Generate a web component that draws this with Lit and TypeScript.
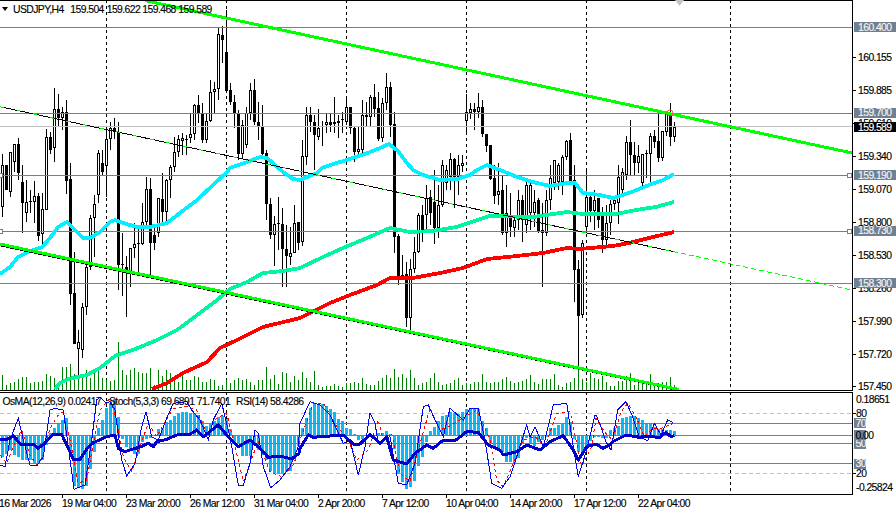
import { LitElement, html, svg, css } from "lit";
import { customElement } from "lit/decorators.js";

// [high, bodyTop, bodyBottom, low, black?] in chart pixels, one per bar (4px apart)
const C: number[][] = [
[154,165,207,217,0],[165,165,190,190,1],[152,152,192,197,0],[144,144,162,172,0],[138,144,173,180,1],[165,182,203,233,1],[180,202,213,222,0],[190,201,202,213,0],[181,196,202,223,0],[193,196,236,241,1],
[193,209,234,244,0],[129,137,210,210,0],[132,137,150,154,1],[88,109,148,162,0],[94,109,118,127,1],[107,112,118,130,0],[100,112,181,194,1],[163,179,294,305,1],[252,293,344,344,1],[330,342,349,378,0],
[303,307,350,358,0],[263,267,307,315,0],[215,218,267,270,0],[195,204,218,257,0],[150,153,195,203,0],[150,163,172,175,1],[130,139,166,197,0],[122,128,139,150,0],[118,128,132,139,1],[122,132,265,290,1],
[233,264,265,296,1],[256,267,273,317,1],[248,248,273,287,0],[223,244,248,258,0],[225,243,244,272,0],[203,222,244,245,0],[177,189,222,227,0],[178,189,243,275,1],[228,235,243,250,1],[198,198,233,237,0],
[173,199,212,225,1],[179,180,212,222,0],[165,167,180,198,0],[137,152,167,172,0],[135,139,152,157,0],[133,138,141,155,0],[135,139,140,155,0],[113,134,138,143,0],[104,105,134,140,0],[95,105,113,123,1],
[103,114,140,143,1],[113,121,140,143,0],[80,92,121,122,0],[82,89,92,113,0],[27,34,89,100,0],[26,35,40,63,1],[10,52,91,92,1],[83,90,102,105,1],[95,102,114,128,1],[110,114,154,160,1],
[120,125,154,158,0],[107,113,145,148,0],[83,90,113,120,0],[79,90,122,125,1],[102,122,127,140,1],[105,127,154,157,1],[150,153,204,220,1],[198,204,235,239,1],[216,224,235,266,0],[197,223,224,250,0],
[208,224,249,287,1],[225,249,256,287,1],[227,253,257,265,0],[205,223,253,253,0],[222,222,243,250,1],
[140,156,242,246,0],[107,115,157,165,0],[107,115,122,132,1],[115,122,135,170,1],[109,128,137,140,0],[121,126,127,146,0],[113,122,125,133,0],[114,122,125,132,1],[97,122,124,133,0],[115,121,123,138,0],
[112,119,120,133,0],[97,107,122,125,0],[107,107,128,134,1],[126,128,152,162,1],[126,149,152,155,0],[100,115,150,153,0],[102,115,117,126,1],[95,97,117,127,0],[84,97,109,117,1],[92,108,139,141,1],
[98,103,138,142,0],[73,87,103,110,0],[82,87,125,137,1],[112,124,237,253,1],[234,236,277,285,1],[255,275,277,280,0],[262,274,318,327,1],[259,269,318,332,0],[237,252,269,273,0],[213,215,252,253,0],
[205,215,232,242,1],[185,198,215,232,0],[190,197,213,225,1],[170,202,228,244,1],[185,205,228,238,0],[160,165,205,207,0],[165,170,183,190,0],[153,159,177,190,0],[158,159,177,208,1],[155,165,177,195,0],
[155,163,166,172,0],[94,112,121,135,0],[103,109,113,119,0],[103,109,112,130,1],[93,107,112,118,0],[100,107,134,137,1],[134,134,146,152,1],[145,145,179,180,1],[165,178,196,204,1],[163,191,195,205,0],
[175,190,233,235,1],[185,213,233,247,0],[193,218,227,237,1],[215,220,228,237,0],[190,200,220,230,0],[195,200,220,242,1],[182,185,225,233,0],[180,185,213,230,0],[190,202,213,227,0],[198,200,232,233,1],
[203,230,233,287,1],[190,200,233,236,0],[165,178,200,210,0],[160,160,183,190,0],[163,165,182,190,0],[155,157,182,195,0],[140,141,157,160,0],[133,140,182,182,1],[165,180,270,302,1],[260,269,316,370,1],
[240,243,315,318,0],[170,197,227,232,0],[192,197,211,222,1],[190,200,211,230,0],[198,198,220,228,1],[207,215,240,253,1],[205,223,240,245,0],[200,204,223,235,0],[197,200,204,210,0],[165,177,203,224,0],
[168,172,190,195,0],[136,142,175,180,0],[120,142,155,175,1],[142,155,163,175,1],[145,156,163,173,0],[154,154,183,186,0],[150,153,154,178,0],[133,136,154,183,0],[130,136,142,148,1],[113,141,158,162,1],
[131,131,158,161,0],[112,113,132,136,0],[103,115,137,146,1],[122,127,137,142,0],
];

const V = [15,5,7,8,11,13,13,7,8,8,9,16,14,12,3,23,23,26,16,12,14,20,12,18,20,12,10,9,10,48,20,15,20,22,18,17,17,22,5,20,14,20,17,13,8,14,10,10,14,13,8,8,11,10,4,5,10,7,10,12,10,11,8,5,10,10,23,11,15,6,18,17,8,14,10,18,12,8,19,5,3,4,4,6,4,3,7,7,8,7,12,6,5,5,9,12,15,12,21,13,16,12,20,12,5,7,8,12,17,8,5,6,7,10,12,5,7,6,8,8,16,8,7,8,8,11,13,9,7,8,9,11,15,8,6,11,11,11,16,5,3,7,8,12,28,11,8,17,12,11,14,8,4,4,9,9,14,17,5,8,8,9,16,5,7,8,8,13,5];

const H = [-21,-18,-14,-19,-21,-24,-24,-24,-27,-27,-24,-9,3,8,12,16,18,-18,-50,-52,-53,-50,-33,-16,8,16,28,32,37,19,-3,-11,-14,-18,-18,-6,-3,-2,0,7,8,14,16,20,23,24,24,23,23,21,15,10,12,15,19,20,17,7,-8,-8,-20,-20,-20,-9,-14,-19,-24,-35,-37,-38,-38,-36,-35,-20,-10,8,18,28,32,32,32,30,27,24,17,15,8,7,2,-4,-3,1,1,1,3,3,5,2,-13,-38,-46,-53,-51,-45,-30,-21,-6,5,9,15,20,21,24,23,22,24,27,28,27,27,15,8,-7,-10,-13,-16,-26,-26,-27,-22,-8,-2,-7,-10,-6,-4,-1,8,8,11,13,19,14,-3,-16,-16,-10,-5,-1,-1,-2,-2,6,8,10,18,19,20,20,18,16,13,12,9,7,7,6,6,5];

const CYAN = "0,274 10,267 18,257 28,252 42,247 50,238 58,227 67,222 75,230 83,238 90,238 100,232 110,222 115,220 123,223 137,227 150,227 167,223 180,213 197,200 213,185 227,172 230,168 247,162 260,157 267,158 283,172 293,179 300,180 317,173 322,168 340,162 353,158 370,152 380,148 389,144 397,150 407,163 413,170 423,175 440,180 457,179 470,175 477,170 487,165 500,170 517,177 533,182 550,186 567,183 575,183 583,193 600,195 613,198 629,193 649,185 663,180 674,174";
const SPRING = "55,389 60,383 68,379 87,375 100,368 115,356 133,350 157,340 177,330 200,313 217,300 230,289 247,282 263,273 283,271 300,268 323,257 343,248 367,238 390,228 410,232 433,231 457,227 477,220 490,216 533,217 553,214 567,212 583,214 616,214 636,210 656,207 674,202";
const RED = "152,389 167,383 183,373 207,362 220,348 237,340 263,327 300,318 310,313 330,303 350,295 377,285 390,278 413,278 440,273 463,268 487,259 517,256 543,253 567,248 580,249 613,246 629,243 649,238 674,232";

// Sub-window curves, read in 3x zoom coordinates per crop
const z = (off: number, s: string) =>
  s.trim().split(/\s+/).map((p) => {
    const [x, y] = p.split(",").map(Number);
    return `${(off + x / 3).toFixed(1)},${(340 + y / 3).toFixed(1)}`;
  }).join(" ");

const RSI = z(0, "0,300 20,298 40,288 62,313 100,313 115,325 135,308 160,283 185,283 205,325 220,358 240,358 262,325 280,308 320,290 345,285 355,325 375,335 430,317 445,310 460,320 470,305 500,298 530,285 570,283 590,270 610,290 655,255 680,285 715,320 750,300 775,320 805,352 840,348 875,357 897,340")
 + " " + z(300, "0,325 25,285 40,292 90,288 130,285 160,312 180,312 210,283 240,310 260,290 280,360 320,372 345,340 380,315 400,325 430,300 465,302 500,275 535,277 565,315 600,330 610,345 650,335 680,315 720,330 750,305 790,287 820,330 835,360 860,320 890,312")
 + " " + z(596, "0,312 20,325 40,315 50,305 90,285 130,292 160,288 190,293 210,277 225,290 235,287");
const STO = z(0, "0,375 15,380 30,300 55,235 70,300 90,375 110,378 130,350 150,210 165,205 190,210 205,320 222,448 255,435 275,300 290,180 300,172 320,190 330,185 345,210 365,360 380,408 405,370 425,260 438,215 455,290 475,300 500,235 520,190 560,185 575,210 600,240 625,300 640,240 665,190 690,290 715,435 730,435 750,370 765,270 775,280 790,380 812,443 840,420 870,380 895,320")
 + " " + z(300, "0,250 30,185 60,195 90,225 130,310 150,300 175,405 195,320 210,218 225,250 235,310 250,300 270,290 295,430 320,435 345,370 370,200 385,195 405,240 430,290 450,205 490,240 510,205 535,205 555,300 575,430 605,445 630,410 650,350 680,255 690,290 705,260 730,320 760,195 800,190 820,320 835,410 860,330 885,225")
 + " " + z(596, "0,225 15,260 30,305 45,330 65,210 90,185 110,230 130,290 155,303 175,250 195,285 215,240 232,248");
const SIG = z(0, "0,345 20,370 40,320 65,270 90,345 110,375 130,345 150,265 175,225 190,215 210,300 235,430 260,420 280,310 300,210 330,175 350,240 370,350 395,395 420,320 445,250 470,290 495,245 520,205 560,200 590,210 620,280 650,235 680,220 710,340 730,425 755,355 775,305 810,395 845,410 880,375 897,330")
 + " " + z(300, "0,300 40,190 70,190 110,260 140,290 170,360 205,330 235,240 250,300 275,280 300,400 330,425 355,330 390,205 420,270 445,260 480,240 530,210 570,300 590,420 610,440 640,370 670,300 705,290 735,320 770,220 810,215 845,380 875,320")
 + " " + z(596, "0,235 25,275 50,300 75,215 95,190 120,230 145,290 170,265 195,265 232,250");

const GRID_X = [106.5, 226.5, 346.5, 466.5, 586.5, 730.5];
const LEVELS = [27, 113, 175, 231, 283];
const TICKS: [string, number][] = [["160.155",57.5],["159.885",90.5],["159.610",123],["159.340",156.5],["159.070",189.5],["158.800",222.5],["158.530",255.5],["158.260",288],["157.990",321.5],["157.720",354.5],["157.450",386.5]];
const TAGS: [string, number][] = [["160.400",27],["159.700",112.5],["159.190",175],["158.730",230.5],["158.300",283]];
const TIMES: [string, number][] = [["16 Mar 2026",-1],["19 Mar 04:00",62],["23 Mar 20:00",126],["26 Mar 12:00",190],["31 Mar 04:00",254],["2 Apr 20:00",318],["7 Apr 12:00",382],["10 Apr 04:00",446],["14 Apr 20:00",510],["17 Apr 12:00",574],["22 Apr 04:00",638]];
const SUB_LEVELS = [423, 435, 443, 463];
const SUB_TAGS: [string, number][] = [["70",423],["50",443.5],["30",463.5]];
const cx = (k: number) => 2 + 4 * k;

@customElement("app-root")
export class AppRoot extends LitElement {
  static styles = css`
    :host { display: block; width: 896px; height: 513px; background: #fff; overflow: hidden; }
    .pane { display: block; width: 896px; }
    .main { height: 391px; }
    .sub { height: 104px; }
    .time { height: 18px; }
    text { font-family: "Liberation Sans", Arial, sans-serif; font-size: 10.4px; letter-spacing: -0.58px; fill: #000; stroke: #000; stroke-width: 0.14px; }
    text.tag { fill: #f4f6f8; stroke: #f4f6f8; }
    text.cur { fill: #fff; stroke: #fff; }
    .crisp { shape-rendering: crispEdges; }
    .dash { stroke: #000; stroke-width: 1; stroke-dasharray: 3 3; fill: none; }
    .level { fill: #708090; }
    .price { fill: #c0c0c0; }
    .frame { fill: #000; }
    .vol { stroke: #008000; stroke-width: 1; }
    .wick { stroke: #000; stroke-width: 1; }
    .bk { fill: #000; }
    .wt { fill: #fff; }
    .ma { fill: none; stroke-width: 3.8; stroke-linejoin: round; }
    .cyan { stroke: #00f0ff; }
    .spring { stroke: #00f5a0; }
    .red { stroke: #ff0000; }
    .trend { fill: none; stroke: #00ff00; stroke-width: 3; }
    .trend-b { fill: none; stroke: #000; stroke-width: 1; }
    .ray { fill: none; stroke: #00ff00; stroke-width: 1; stroke-dasharray: 5 3; }
    .fleck { fill: none; stroke: #00ff00; stroke-width: 1; stroke-dasharray: 4 13; }
    .tagbg { fill: #708090; }
    .curbg { fill: #000; }
    .handle { fill: #fff; stroke: #708090; stroke-width: 1; }
    .soft { stroke: #c0c0c0; stroke-width: 1; stroke-dasharray: 4 3; fill: none; }
    .hist { fill: #12b6f2; }
    .rsi { fill: none; stroke: #0000cd; stroke-width: 3; stroke-linejoin: round; }
    .sto { fill: none; stroke: #0000ff; stroke-width: 1; }
    .sig { fill: none; stroke: #ff0000; stroke-width: 1; stroke-dasharray: 3 3; }
    .mark { fill: none; stroke: #ff5050; stroke-width: 1; }
    .chev { fill: #c4c4c4; }
  `;

  private candle(c: number[], k: number) {
    const x = cx(k);
    const [hi, t, b, lo, black] = c;
    return svg`<line class="wick" x1=${x + 0.5} x2=${x + 0.5} y1=${hi} y2=${lo}></line>
      <rect class="bk" x=${x - 1} y=${t} width="3" height=${Math.max(1, b - t)}></rect>
      ${!black && b - t > 2 ? svg`<rect class="wt" x=${x} y=${t + 1} width="1" height=${b - t - 2}></rect>` : ""}`;
  }

  private mainPane() {
    return html`<svg class="pane main" viewBox="0 0 896 391" width="896" height="391">
      <g class="crisp">
        ${GRID_X.map((x) => svg`<line class="dash" x1=${x} x2=${x} y1="0" y2="390"></line>`)}
        ${V.map((h, k) => svg`<line class="vol" x1=${cx(k) + 0.5} x2=${cx(k) + 0.5} y1=${390 - h} y2="390"></line>`)}
        ${C.map((c, k) => this.candle(c, k))}
        ${LEVELS.map((y) => svg`<rect class="level" x="0" y=${y} width="852" height="1"></rect>`)}
        <rect class="price" x="0" y="126" width="852" height="1"></rect>
        <polyline class="ma cyan" points=${CYAN}></polyline>
        <polyline class="ma spring" points=${SPRING}></polyline>
        <polyline class="ma red" points=${RED}></polyline>
        <line class="trend" x1="145" y1="0.5" x2="852" y2="153"></line>
        <line class="trend-b" x1="0" y1="106.7" x2="673" y2="251.5"></line>
        <line class="fleck" x1="0" y1="106.7" x2="673" y2="251.5"></line>
        <line class="ray" x1="673" y1="251.5" x2="852" y2="290"></line>
        <line class="trend-b" x1="0" y1="245.8" x2="676" y2="390"></line>
        <line class="trend" x1="0" y1="244" x2="679" y2="389.5"></line>
        <rect class="frame" x="0" y="0" width="852" height="1"></rect>
        <rect class="frame" x="0" y="390" width="852" height="1"></rect>
        <rect class="frame" x="852" y="0" width="1" height="391"></rect>
        ${TICKS.map(([, y]) => svg`<rect class="frame" x="853" y=${Math.floor(y)} width="3" height="1"></rect>`)}
      </g>
      <circle class="mark" cx="670" cy="113" r="3"></circle>
      <polygon class="chev" points="675,0 684,0 679.5,6"></polygon>
      <g class="crisp">
        <rect class="handle" x="847.5" y="173.5" width="4" height="4"></rect>
        <rect class="handle" x="847.5" y="229.5" width="4" height="4"></rect>
        <rect class="handle" x="-1.5" y="173.5" width="4" height="4"></rect>
        <rect class="handle" x="-1.5" y="229.5" width="4" height="4"></rect>
      </g>
      <polygon class="bk" points="2,7 8,7 5,11"></polygon>
      <text x="13" y="13">USDJPY,H4</text>
      <text x="70.3" y="13">159.504</text>
      <text x="106.7" y="13">159.622</text>
      <text x="142.3" y="13">159.468</text>
      <text x="178.3" y="13">159.589</text>
      ${TICKS.map(([t, y]) => svg`<text x="858" y=${y + 3.5}>${t}</text>`)}
      ${TAGS.map(([t, y]) => svg`<rect class="tagbg crisp" x="854" y=${Math.round(y - 5)} width="42" height="10"></rect><text class="tag" x="858" y=${y + 3.5}>${t}</text>`)}
      <rect class="curbg crisp" x="854" y="122" width="42" height="10"></rect>
      <text class="cur" x="858" y="130.5">159.589</text>
    </svg>`;
  }

  private subPane() {
    return html`<svg class="pane sub" viewBox="0 391 896 104" width="896" height="104">
      <g class="crisp">
        ${GRID_X.map((x) => svg`<line class="dash" x1=${x} x2=${x} y1="392" y2="494"></line>`)}
        <line class="soft" x1="0" x2="852" y1="413.5" y2="413.5"></line>
        <line class="soft" x1="0" x2="852" y1="473.5" y2="473.5"></line>
        ${H.map((h, k) => svg`<rect class="hist" x=${cx(k) - 1} y=${h > 0 ? 436 - h : 436} width="3" height=${Math.abs(h)}></rect>`)}
        ${SUB_LEVELS.map((y) => svg`<rect class="level" x="0" y=${y} width="852" height="1"></rect>`)}
        <polyline class="sig" points=${SIG}></polyline>
        <polyline class="sto" points=${STO}></polyline>
        <polyline class="rsi" points=${RSI}></polyline>
        <rect class="frame" x="0" y="392" width="853" height="1"></rect>
        <rect class="frame" x="0" y="494" width="853" height="1"></rect>
        <rect class="frame" x="852" y="392" width="1" height="103"></rect>
        <rect class="frame" x="853" y="413" width="3" height="1"></rect>
        <rect class="frame" x="853" y="473" width="3" height="1"></rect>
      </g>
      <text x="2.5" y="405">OsMA(12,26,9) 0.02417</text>
      <text x="109" y="405">Stoch(5,3,3) 69.6891 71.7401</text>
      <text x="236" y="405">RSI(14) 58.4286</text>
      <text x="856" y="402.5">0.18651</text>
      <text x="856" y="490.5">-0.25824</text>
      <text x="856" y="416.5">80</text>
      <text x="856" y="476.5">20</text>
      ${SUB_TAGS.map(([t, y]) => svg`<rect class="tagbg crisp" x="854" y=${Math.round(y - 5)} width="12" height="10"></rect><text class="tag" x="855.5" y=${y + 3.5}>${t}</text>`)}
      <rect class="tagbg crisp" x="854" y="430" width="12" height="10"></rect>
      <text x="855.5" y="439">0.00</text>
    </svg>`;
  }

  private timePane() {
    return html`<svg class="pane time" viewBox="0 495 896 18" width="896" height="18">
      <g class="crisp">
        ${TIMES.slice(1).map(([, x]) => svg`<rect class="frame" x=${x} y="495" width="1" height="3"></rect>`)}
      </g>
      ${TIMES.map(([t, x]) => svg`<text x=${x} y="507">${t}</text>`)}
    </svg>`;
  }

  render() {
    return html`${this.mainPane()}${this.subPane()}${this.timePane()}`;
  }
}
